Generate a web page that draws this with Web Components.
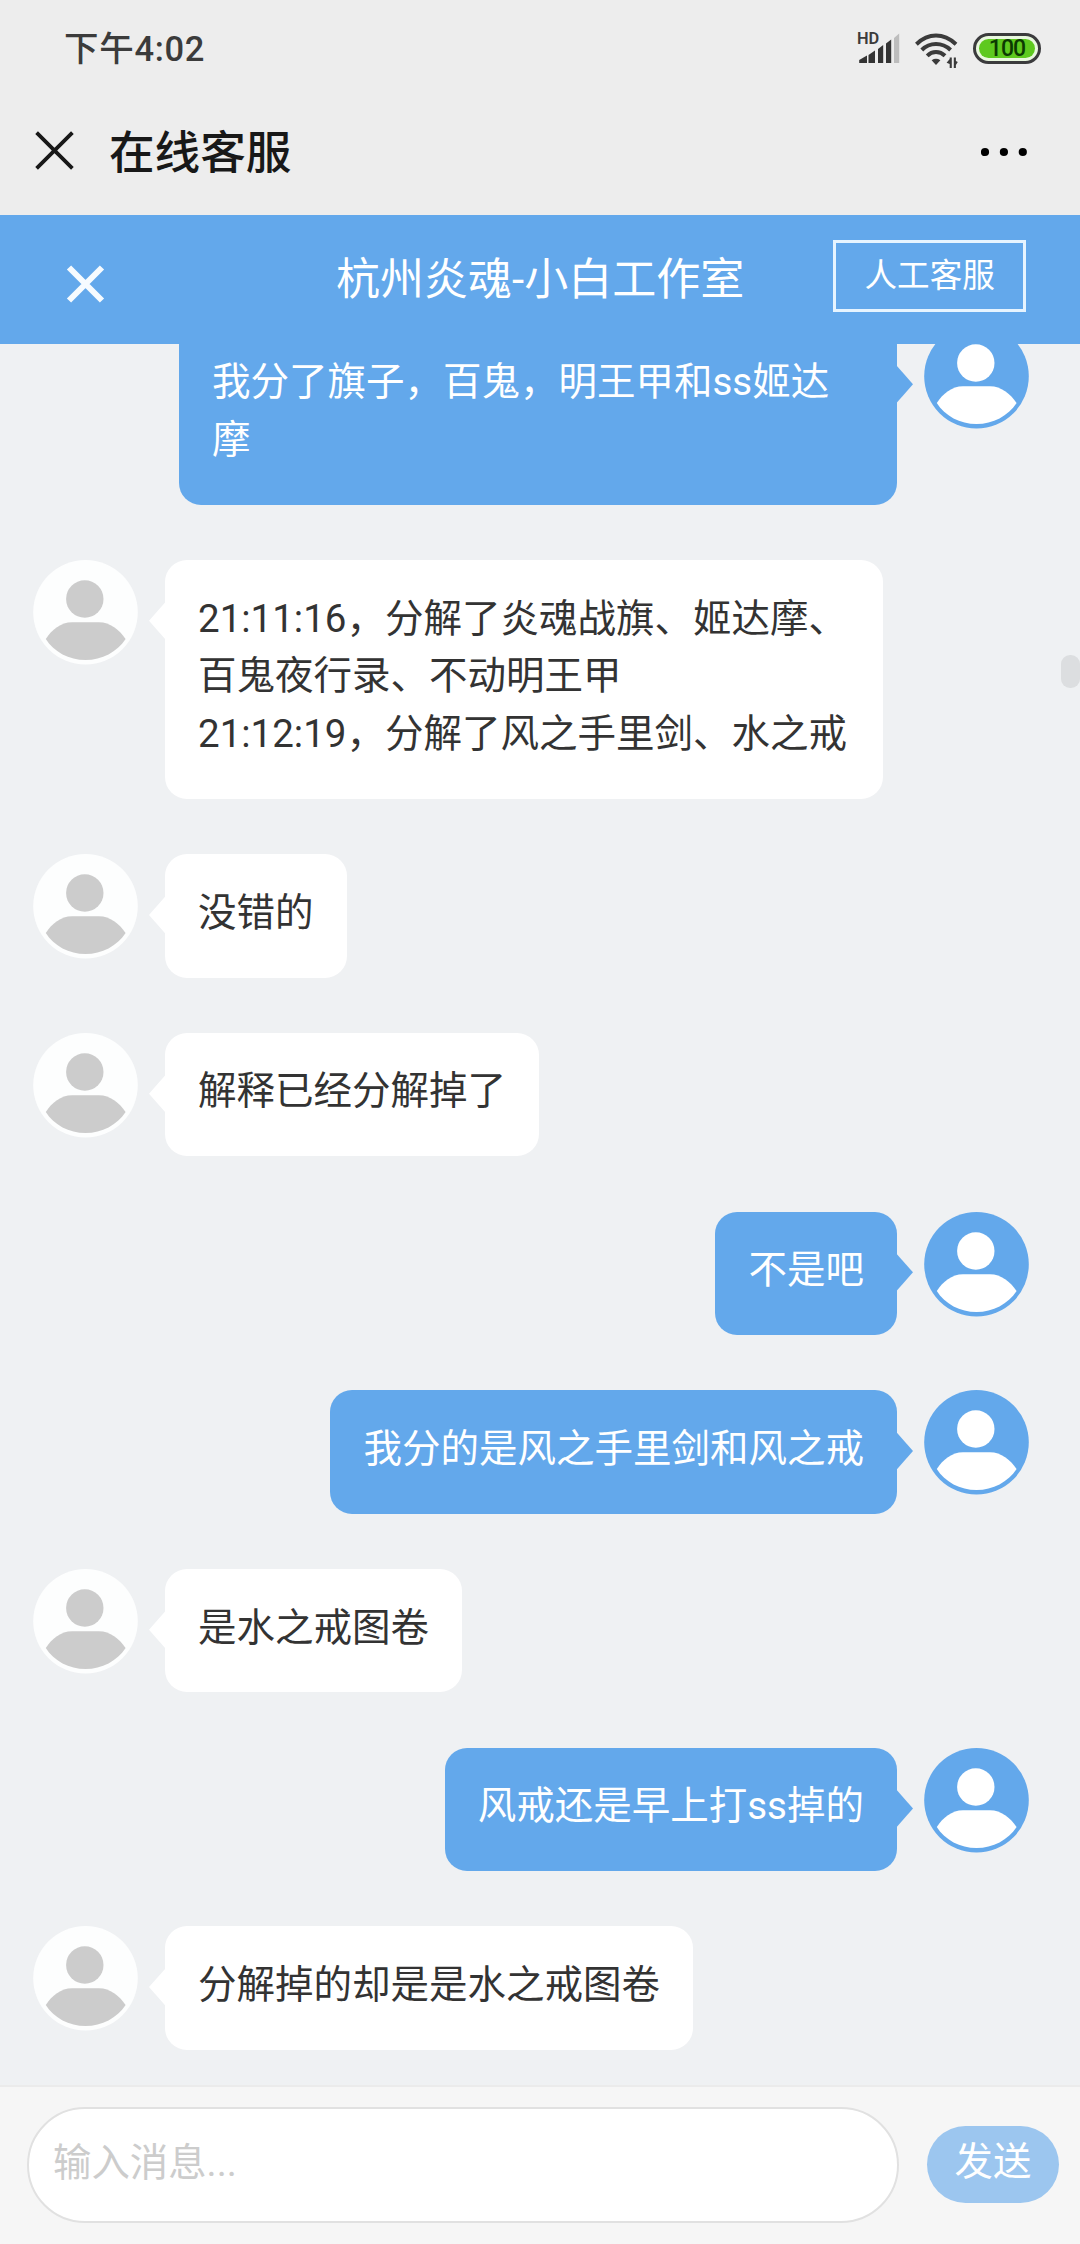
<!DOCTYPE html>
<html lang="zh-CN">
<head>
<meta charset="utf-8">
<title>在线客服</title>
<style>
html,body{margin:0;padding:0}
body{width:1080px;height:2244px;overflow:hidden;background:#eff1f3;font-family:Roboto,"Noto Sans CJK SC",sans-serif;color:#333}
</style>
</head>
<body>
<chat-app>
  <status-bar slot="top" time="下午4:02" battery="100"></status-bar>
  <title-bar slot="top">在线客服</title-bar>
  <service-header slot="top" action="人工客服">杭州炎魂-小白工作室</service-header>
  <chat-message side="right">我分了旗子，百鬼，明王甲和ss姬达摩</chat-message>
  <chat-message>21:11:16，分解了炎魂战旗、姬达摩、百鬼夜行录、不动明王甲<br>21:12:19，分解了风之手里剑、水之戒</chat-message>
  <chat-message>没错的</chat-message>
  <chat-message>解释已经分解掉了</chat-message>
  <chat-message side="right">不是吧</chat-message>
  <chat-message side="right">我分的是风之手里剑和风之戒</chat-message>
  <chat-message>是水之戒图卷</chat-message>
  <chat-message side="right">风戒还是早上打ss掉的</chat-message>
  <chat-message>分解掉的却是是水之戒图卷</chat-message>
  <chat-composer slot="bottom" placeholder="输入消息..." action="发送"></chat-composer>
</chat-app>
<script>
const define = (name, html) => customElements.define(name, class extends HTMLElement {
  constructor() {
    super();
    this.attachShadow({ mode: 'open' }).innerHTML = html;
  }
  connectedCallback() {
    this.shadowRoot.querySelectorAll('[data-attr]').forEach(el => {
      el.textContent = this.getAttribute(el.dataset.attr) || '';
    });
  }
});

define('chat-app', `
<style>
:host{display:flex;flex-direction:column;width:1080px;height:2244px;position:relative}
main{flex:1;min-height:0;box-sizing:border-box;overflow:hidden;display:flex;flex-direction:column;justify-content:flex-end;gap:55.3px;padding:0 51px 35.200px 33px;background:#eff1f3}
.thumb{position:absolute;right:0;top:655px;width:19px;height:33px;border-radius:9px;background:#dcdee0}
</style>
<slot name="top"></slot>
<main><slot></slot></main>
<slot name="bottom"></slot>
<div class="thumb"></div>`);

define('status-bar', `
<style>
:host{display:flex;align-items:center;height:96px;box-sizing:border-box;background:#ededed;padding:0 39px 0 64px;color:#3b3b3b}
.time{font-size:34.5px;font-weight:500;letter-spacing:.7px;line-height:40px;padding-top:2px;flex:1}
.cell{width:44px;height:44px;margin-right:13px;flex:none}
.wifi{width:46px;height:38px;margin-right:13px;flex:none;margin-top:3px}
.bat{box-sizing:border-box;width:68px;height:31px;border:3.5px solid #3b3b3d;border-radius:16px;background:#e9f8df;padding:3px;display:flex}
.fill{flex:1;border-radius:10px;background:#5ec91f;display:flex;align-items:center;justify-content:center;font-size:23px;line-height:18px;padding-top:1.5px;font-weight:500;letter-spacing:-.9px;color:#0c3a02}
</style>
<span class="time" data-attr="time"></span>
<svg class="cell" viewBox="0 -5 44 44"><text x="0" y="13.2" font-size="16.4" font-weight="600" fill="#3b3b3b">HD</text>
<g fill="#333"><path d="M2.200 32V29L10 24.500V32Z"/><path d="M11.500 32V24L18 19.500V32Z"/><path d="M21 32V18L26.200 14V32Z"/><path d="M29 32V12.500L34.200 8.500V32Z"/></g><path fill="#bdbdbd" d="M37 32V7L42.200 2.500V32Z"/></svg>
<svg class="wifi" viewBox="0 0 46 38"><g fill="none" stroke="#3b3b3b" stroke-width="4"><path d="M2.400 13.200Q11.500 4.600 22 4.600T42 13.200"/><path d="M7.800 19Q13.700 13 22 13T36.600 19"/><path d="M13.200 24.800Q17 21 22 21T31 24.800"/></g><path fill="#3b3b3b" d="M17.600 29.200Q22 26.400 26.400 29.200L22 34Z"/><path fill="#3b3b3b" d="M37.800 26.500V37H35.700V33L32.600 31.800L35.700 28V26.500ZM39.800 37V26.500H41.900V30L43.800 31L41.900 34V37Z"/></svg>
<div class="bat"><div class="fill" data-attr="battery"></div></div>`);

define('title-bar', `
<style>
:host{display:flex;align-items:center;height:119px;box-sizing:border-box;background:#ededed;padding:0 53px 9px 35px;color:#181818}
.close{width:39px;height:39px;margin-right:35px;flex:none;margin-top:-1px}
h1{margin:0;flex:1;font-size:45.6px;font-weight:500;line-height:60px;padding-top:5px}
.more{width:46px;height:10px;flex:none;margin-top:2px}
</style>
<svg class="close" viewBox="0 0 39 39"><path d="M1.600 1.600L37.400 37.400M37.400 1.600L1.600 37.400" stroke="#181818" stroke-width="3.800" fill="none"/></svg>
<h1><slot></slot></h1>
<svg class="more" viewBox="0 0 46 10"><circle cx="4" cy="5" r="4.100"/><circle cx="22.900" cy="5" r="4.100"/><circle cx="41.800" cy="5" r="4.100"/></svg>`);

define('service-header', `
<style>
:host{display:grid;grid-template-columns:271px 1fr 193px;align-items:center;height:129px;box-sizing:border-box;background:#63a8eb;color:#fff;padding:0 54px 8px 65px}
.close{width:41px;height:41px;margin-top:15px}
.name{font-size:44px;line-height:60px;padding:8px 89px 0 0;white-space:nowrap;text-align:center}
button{all:unset;box-sizing:border-box;width:193px;height:72px;border:3px solid #e6f4ff;font-size:32.600px;line-height:66px;text-align:center}
</style>
<svg class="close" viewBox="0 0 41 41"><path d="M4 4.500L37 37.500M37 4.500L4 37.500" stroke="#f6fbff" stroke-width="6" fill="none"/></svg>
<div class="name"><slot></slot></div>
<button data-attr="action"></button>`);

define('user-avatar', `
<style>
:host{display:block;width:105px;height:105px;flex:none;--disc:#fdfefe;--figure:#ccc}
:host([kind=self]){--disc:#63a8eb;--figure:#fff}
svg{display:block;width:100%;height:100%}
</style>
<svg viewBox="0 0 105 105"><circle cx="52.500" cy="52.300" r="52.300" fill="var(--disc)"/><g fill="var(--figure)"><circle cx="51.800" cy="39" r="18.700"/><path d="M12.800 79C18.500 70 28 62.300 39 62.300H66C77 62.300 86.500 70 92.600 79C84 92 69 100 52.500 100S21 92 12.800 79Z"/></g></svg>`);

customElements.define('chat-message', class extends HTMLElement {
  constructor() {
    super();
    const self = this.getAttribute('side') === 'right';
    this.attachShadow({ mode: 'open' }).innerHTML = `
<style>
:host{display:flex;align-items:flex-start;gap:27px;flex:none;--bubble:#fff}
:host([side=right]){flex-direction:row-reverse;--bubble:#63a8eb;color:#fff}
.bubble{position:relative;box-sizing:border-box;max-width:718px;padding:29.500px 33px 36.100px;border-radius:22px;background:var(--bubble);font-size:38.500px;line-height:57.800px}
.bubble::before{content:"";position:absolute;top:42px;left:-16px;width:16.500px;height:37.400px;background:var(--bubble);clip-path:polygon(100% 0,0 50%,100% 100%)}
:host([side=right]) .bubble::before{left:auto;right:-16px;clip-path:polygon(0 0,100% 50%,0 100%)}
</style>
<user-avatar ${self ? 'kind="self"' : ''}></user-avatar>
<div class="bubble"><slot></slot></div>`;
  }
});

define('chat-composer', `
<style>
:host{display:flex;align-items:center;gap:28px;height:159px;box-sizing:border-box;border-top:2px solid #ebebeb;background:#f6f6f6;padding:0 21px 2px 27px;font-size:38.400px}
.field{flex:1;box-sizing:border-box;height:116px;border:2.500px solid #e1e1e1;border-radius:58px;background:#fff;color:#ccc;padding:0 24px;line-height:108px}
button{all:unset;box-sizing:border-box;width:132px;height:77px;padding-bottom:5px;border-radius:39px;background:#9cc6ef;color:#fff;text-align:center;line-height:60px}
</style>
<div class="field" data-attr="placeholder"></div>
<button data-attr="action"></button>`);
</script>
</body>
</html>
